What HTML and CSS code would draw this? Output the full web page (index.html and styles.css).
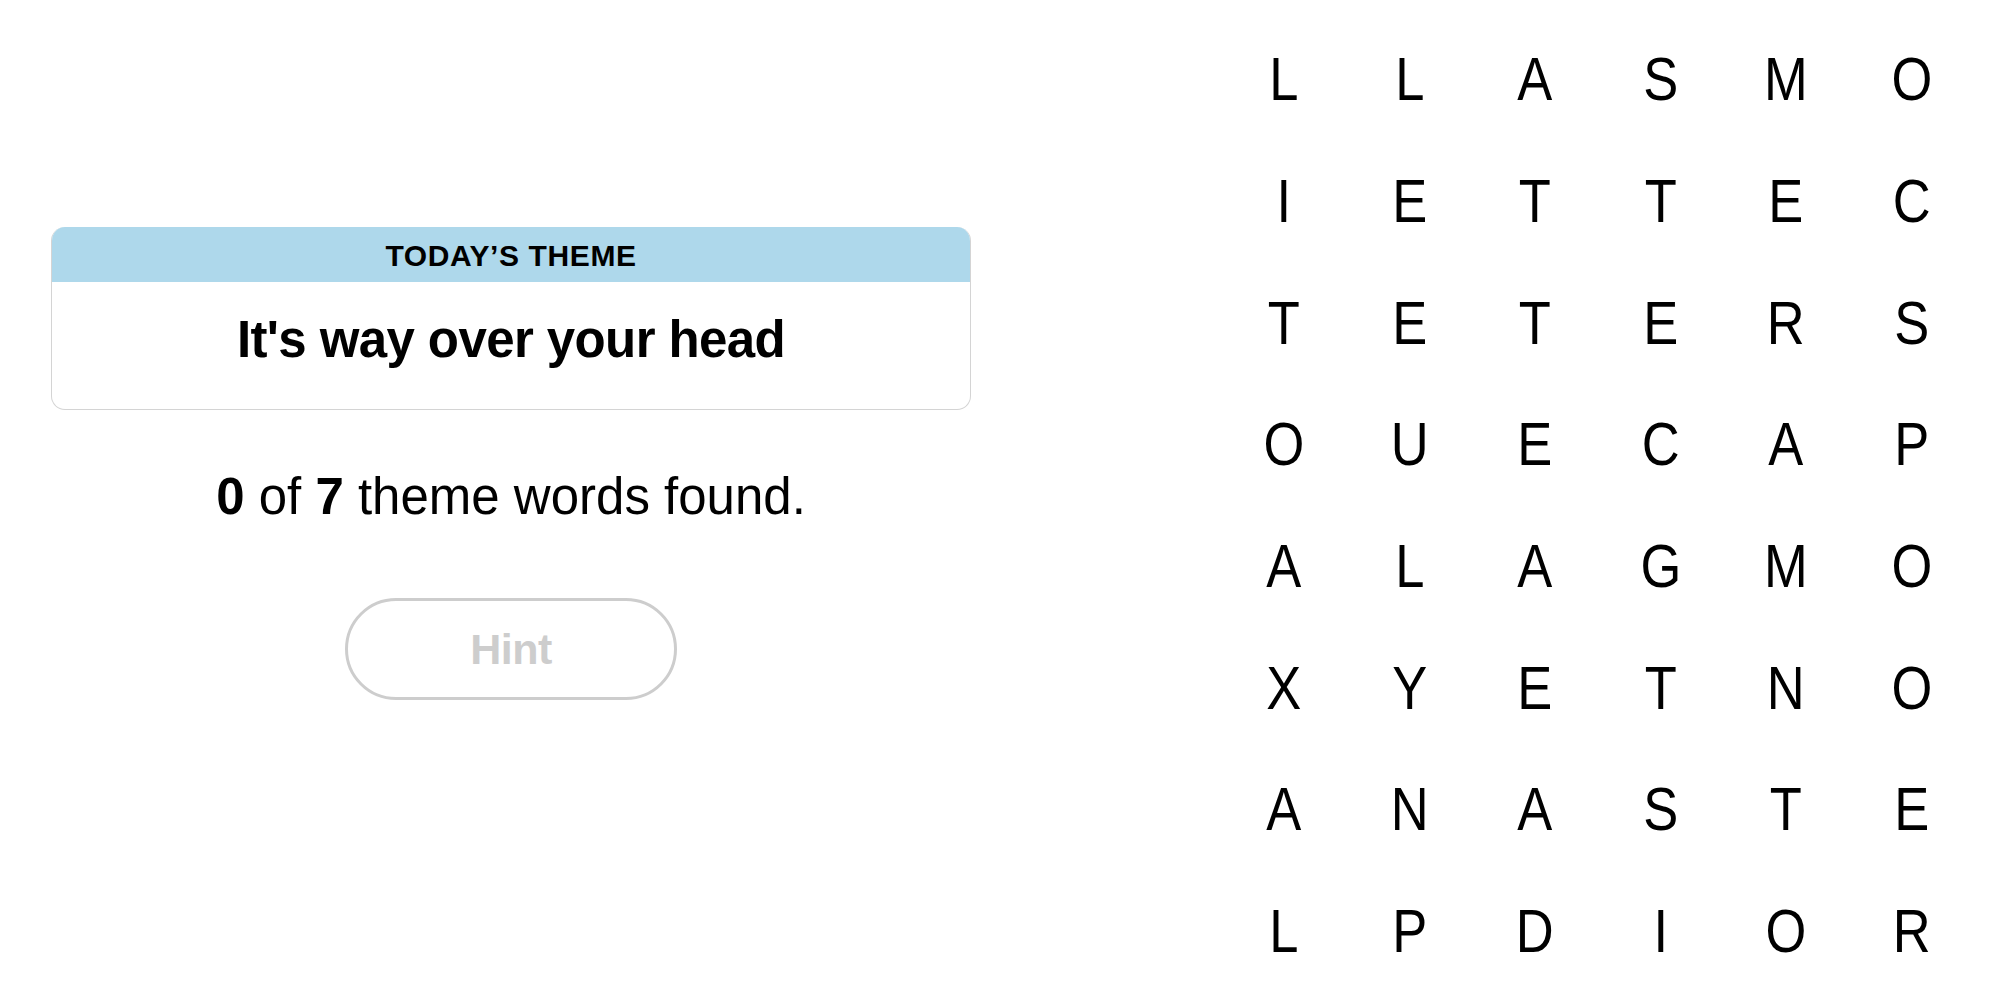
FILE: index.html
```html
<!DOCTYPE html>
<html lang="en">
<head>
<meta charset="utf-8">
<title>Strands</title>
<link rel="stylesheet" href="styles.css">
</head>
<body>
<main class="game">
  <section class="info">
    <div class="theme-card">
      <div class="theme-head">TODAY’S THEME</div>
      <div class="theme-body">It's way over your head</div>
    </div>
    <p class="progress"><b>0</b> of <b>7</b> theme words found.</p>
    <button class="hint" disabled>Hint</button>
  </section>
  <section class="board">
    <span>L</span><span>L</span><span>A</span><span>S</span><span>M</span><span>O</span>
    <span>I</span><span>E</span><span>T</span><span>T</span><span>E</span><span>C</span>
    <span>T</span><span>E</span><span>T</span><span>E</span><span>R</span><span>S</span>
    <span>O</span><span>U</span><span>E</span><span>C</span><span>A</span><span>P</span>
    <span>A</span><span>L</span><span>A</span><span>G</span><span>M</span><span>O</span>
    <span>X</span><span>Y</span><span>E</span><span>T</span><span>N</span><span>O</span>
    <span>A</span><span>N</span><span>A</span><span>S</span><span>T</span><span>E</span>
    <span>L</span><span>P</span><span>D</span><span>I</span><span>O</span><span>R</span>
  </section>
</main>
</body>
</html>
```

FILE: styles.css
```css
* { box-sizing: border-box; }
html, body {
  margin: 0;
  background: #ffffff;
  color: #000000;
  font-family: "Liberation Sans", Arial, sans-serif;
}
.game {
  display: flex;
  align-items: flex-start;
  width: 2000px;
  height: 1005px;
  padding-left: 51px;
}
.info {
  width: 920px;
  display: flex;
  flex-direction: column;
  align-items: center;
  padding-top: 227px;
}
.theme-card {
  width: 920px;
  border: 1.5px solid #d4d4d4;
  border-top: none;
  border-radius: 14px;
  overflow: hidden;
}
.theme-head {
  height: 55px;
  background: #aed8eb;
  display: flex;
  align-items: center;
  justify-content: center;
  padding-top: 2px;
  font-size: 30px;
  font-weight: 700;
  letter-spacing: 0.6px;
}
.theme-body {
  height: 127px;
  padding-top: 32px;
  text-align: center;
  font-size: 51px;
  line-height: 1;
  font-weight: 700;
  letter-spacing: -0.6px;
}
.progress {
  margin: 61px 0 0;
  font-size: 51px;
  line-height: 1;
}
.progress b { font-weight: 700; }
.hint {
  margin-top: 76px;
  width: 332px;
  height: 102px;
  border: 3px solid #cdcdcd;
  border-radius: 51px;
  background: #ffffff;
  color: #cdcdcd;
  font-family: "Liberation Sans", Arial, sans-serif;
  font-size: 43px;
  font-weight: 700;
  letter-spacing: -0.5px;
}
.board {
  margin-left: 250px;
  margin-top: 19px;
  display: grid;
  grid-template-columns: repeat(6, 125.6px);
  grid-auto-rows: 121.7px;
}
.board span {
  display: flex;
  align-items: center;
  justify-content: center;
  font-size: 61px;
  line-height: 1;
  transform: scaleX(0.86);
}
```
